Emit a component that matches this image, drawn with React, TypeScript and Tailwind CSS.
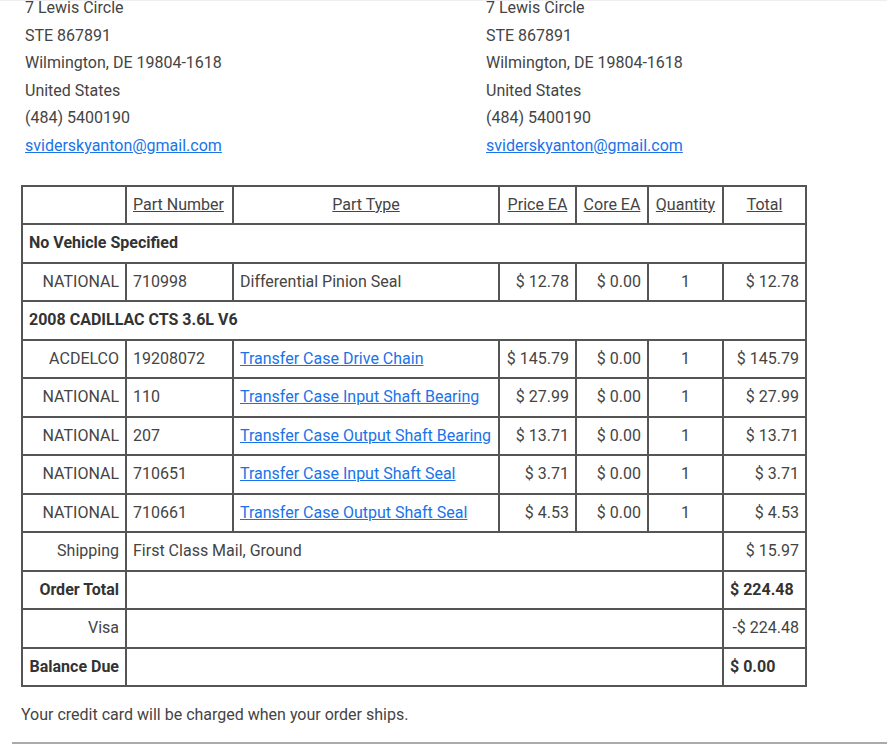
const cell = "border-2 border-[#555] px-[6px] py-0 align-middle whitespace-nowrap";

const Address = () => (
  <div className="leading-[27.6px]">
    <div>7 Lewis Circle</div>
    <div>STE 867891</div>
    <div>Wilmington, DE 19804-1618</div>
    <div>United States</div>
    <div>(484) 5400190</div>
    <a href="#" className="text-[#1a73e8] underline">
      sviderskyanton@gmail.com
    </a>
  </div>
);

type Part = {
  brand: string;
  num: string;
  type: string;
  link: boolean;
  price: string;
  total: string;
};

const parts1: Part[] = [
  { brand: "NATIONAL", num: "710998", type: "Differential Pinion Seal", link: false, price: "$ 12.78", total: "$ 12.78" },
];

const parts2: Part[] = [
  { brand: "ACDELCO", num: "19208072", type: "Transfer Case Drive Chain", link: true, price: "$ 145.79", total: "$ 145.79" },
  { brand: "NATIONAL", num: "110", type: "Transfer Case Input Shaft Bearing", link: true, price: "$ 27.99", total: "$ 27.99" },
  { brand: "NATIONAL", num: "207", type: "Transfer Case Output Shaft Bearing", link: true, price: "$ 13.71", total: "$ 13.71" },
  { brand: "NATIONAL", num: "710651", type: "Transfer Case Input Shaft Seal", link: true, price: "$ 3.71", total: "$ 3.71" },
  { brand: "NATIONAL", num: "710661", type: "Transfer Case Output Shaft Seal", link: true, price: "$ 4.53", total: "$ 4.53" },
];

const PartRow = ({ p }: { p: Part }) => (
  <tr className="h-[38.5px]">
    <td className={`${cell} text-right`}>{p.brand}</td>
    <td className={cell}>{p.num}</td>
    <td className={cell}>
      {p.link ? (
        <a href="#" className="text-[#1a73e8] underline">
          {p.type}
        </a>
      ) : (
        p.type
      )}
    </td>
    <td className={`${cell} text-right`}>{p.price}</td>
    <td className={`${cell} text-right`}>$ 0.00</td>
    <td className={`${cell} text-center`}>1</td>
    <td className={`${cell} text-right`}>{p.total}</td>
  </tr>
);

const SummaryRow = ({ label, value, bold, mid }: { label: string; value: string; bold?: boolean; mid?: string }) => (
  <tr className="h-[38.5px]">
    <td className={`${cell} text-right ${bold ? "font-bold text-[#333]" : ""}`}>{label}</td>
    <td className={cell} colSpan={5}>
      {mid}
    </td>
    <td className={`${cell} ${bold ? "font-bold text-[#333] text-left" : "text-right"}`}>{value}</td>
  </tr>
);

const Head = ({ label, center = true }: { label: string; center?: boolean }) => (
  <td className={`${cell} ${center ? "text-center" : ""}`}>
    <span className="underline">{label}</span>
  </td>
);

export default function App() {
  return (
    <div className="h-[750px] bg-white border-t border-[#eee] font-['Roboto',sans-serif] text-[16px] leading-[24px] text-[#444] overflow-hidden">
      <div className="flex -mt-[7px] pl-[25px]">
        <div className="w-[461px]">
          <Address />
        </div>
        <Address />
      </div>

      <table className="ml-[21px] mt-[25px] w-[784px] border-collapse table-fixed">
        <colgroup>
          <col className="w-[104px]" />
          <col className="w-[107px]" />
          <col className="w-[266px]" />
          <col className="w-[77px]" />
          <col className="w-[72px]" />
          <col className="w-[75px]" />
          <col className="w-[83px]" />
        </colgroup>
        <tbody>
          <tr className="h-[38.5px]">
            <td className={cell}></td>
            <Head label="Part Number" center={false} />
            <Head label="Part Type" />
            <Head label="Price EA" />
            <Head label="Core EA" />
            <Head label="Quantity" />
            <Head label="Total" />
          </tr>
          <tr className="h-[38.5px]">
            <td className={`${cell} font-bold text-[#333]`} colSpan={7}>
              No Vehicle Specified
            </td>
          </tr>
          {parts1.map((p) => (
            <PartRow key={p.num} p={p} />
          ))}
          <tr className="h-[38.5px]">
            <td className={`${cell} font-bold text-[#333]`} colSpan={7}>
              2008 CADILLAC CTS 3.6L V6
            </td>
          </tr>
          {parts2.map((p) => (
            <PartRow key={p.num} p={p} />
          ))}
          <SummaryRow label="Shipping" mid="First Class Mail, Ground" value="$ 15.97" />
          <SummaryRow label="Order Total" value="$ 224.48" bold />
          <SummaryRow label="Visa" value="-$ 224.48" />
          <SummaryRow label="Balance Due" value="$ 0.00" bold />
        </tbody>
      </table>

      <p className="ml-[21px] mt-[16px]">Your credit card will be charged when your order ships.</p>
      <hr className="ml-[12px] mt-[15px] border-t-2 border-[#aaa]" />
    </div>
  );
}
